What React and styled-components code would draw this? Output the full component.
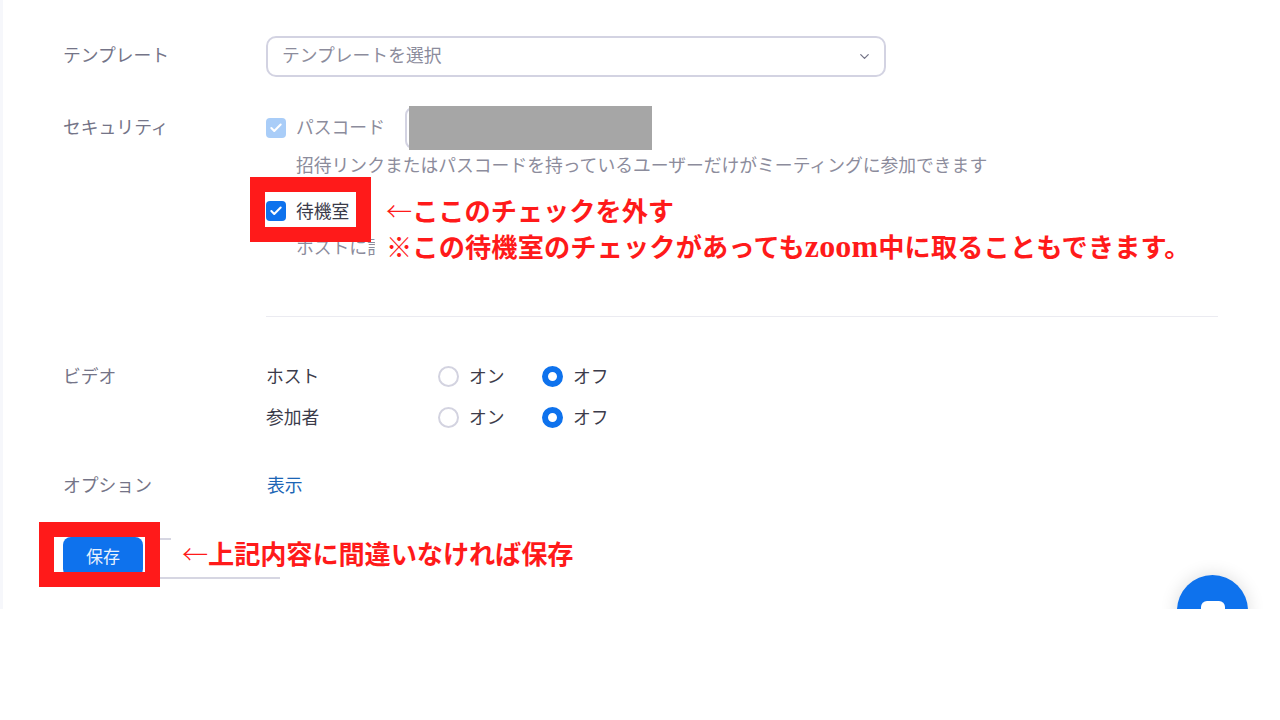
import React from 'react'
import styled, { createGlobalStyle } from 'styled-components'
import { Check, ChevronDown } from 'lucide-react'

const GlobalStyle = createGlobalStyle`
  html, body { margin: 0; padding: 0; background: #fff; }
  body { font-family: "Noto Sans CJK JP", "Noto Sans", sans-serif; }
`
const Page = styled.div`
  position: relative;
  box-sizing: border-box;
  width: 1263px;
  height: 609px;
  overflow: hidden;
  padding: 36px 45px 0 61px;
  background: #fff;
  border-left: 3px solid #f6f7fb;
  font-size: 17.8px;
  color: #747487;
`
const FormRow = styled.div`
  display: grid;
  grid-template-columns: 202px 1fr;
  margin-top: ${props => props.$gap || 0}px;
`
const Label = styled.div`
  margin-left: -1px;
  line-height: ${props => props.$lh}px;
  color: #747487;
`
const Select = styled.div`
  box-sizing: border-box;
  display: flex;
  align-items: center;
  justify-content: space-between;
  width: 620px;
  height: 41px;
  padding: 0 12px 0 14px;
  border: 2px solid #d3d3e2;
  border-radius: 10px;
  color: #8c8c9c;
`
const SelectText = styled.span`
  padding-bottom: 5px;
`
const CheckRow = styled.div`
  position: relative;
  display: flex;
  align-items: center;
  gap: 10px;
  height: ${props => props.$height}px;
  margin-top: ${props => props.$gap || 0}px;
  color: ${props => props.$muted ? '#8c8c9c' : '#3b3b4a'};
`
const CheckText = styled.span`
  padding-bottom: 3px;
`
const CheckBox = styled.span`
  display: flex;
  align-items: center;
  justify-content: center;
  width: 20px;
  height: 20px;
  border-radius: 4px;
  background: ${props => props.$muted ? '#a9cdf8' : '#0e72ed'};
  color: #fff;
`
const PassInput = styled.div`
  box-sizing: border-box;
  width: 60px;
  height: 42px;
  margin-left: 10px;
  border: 2px solid #d3d3e2;
  border-radius: 8px;
`
const Mask = styled.div`
  position: absolute;
  left: 143px;
  top: 0;
  width: 243px;
  height: 44px;
  background: #a6a6a6;
`
const Hint = styled.div`
  margin-left: 30px;
  line-height: 30px;
  color: #8c8c9c;
  white-space: nowrap;
  margin-top: ${props => props.$gap || 0}px;
  width: ${props => props.$width || 'auto'};
  overflow: hidden;
`
const Divider = styled.hr`
  height: 1px;
  margin: 55px 0 44px;
  border: 0;
  background: #ebebf1;
`
const MediaRow = styled.div`
  display: grid;
  grid-template-columns: 172px 104px 104px;
  align-items: center;
  height: 30px;
  margin-top: ${props => props.$gap || 0}px;
  color: #3b3b4a;
`
const MediaText = styled.span`
  padding-bottom: 2px;
`
const RadioLabel = styled.span`
  display: flex;
  align-items: center;
  gap: 10px;
`
const Radio = styled.span`
  box-sizing: border-box;
  width: 21px;
  height: 21px;
  border-radius: 50%;
  background: #fff;
  border: ${props => props.$on ? '6.5px solid #0e72ed' : '2px solid #d3d3e0'};
`
const LinkText = styled.span`
  margin-left: 1px;
  line-height: 36px;
  color: #1b65b5;
`
const SaveRow = styled.div`
  display: flex;
  margin-top: 35px;
  margin-left: -1px;
`
const SaveButton = styled.div`
  box-sizing: border-box;
  width: 80px;
  height: 40px;
  padding-top: 6px;
  text-align: center;
  border-radius: 8px;
  background: #0e72ed;
  color: #e8f1fd;
  font-size: 17px;
`
const GhostButton = styled.div`
  position: relative;
  box-sizing: border-box;
  width: 127px;
  height: 41px;
  margin: 1px 0 0 10px;
  border-bottom: 2px solid #d6d6e2;
  &::before {
    content: '';
    position: absolute;
    top: 0;
    left: 0;
    width: 18px;
    height: 2px;
    background: #d6d6e2;
  }
`
const RedFrame = styled.div`
  position: absolute;
  box-sizing: border-box;
  left: ${props => props.$left}px;
  top: ${props => props.$top}px;
  width: 121px;
  height: 65px;
  border: 15px solid #ff1a1a;
`
const Note = styled.div`
  position: absolute;
  left: ${props => props.$left}px;
  top: ${props => props.$top}px;
  line-height: 36px;
  font-size: 26.2px;
  font-weight: 700;
  letter-spacing: ${props => props.$spacing || 0}px;
  color: #ff1a1a;
  white-space: nowrap;
`
const Arrow = styled.span`
  font-weight: 300;
`
const Latin = styled.span`
  font-family: "Liberation Serif", serif;
  font-size: 32px;
`
const ChatButton = styled.div`
  position: absolute;
  left: 1174px;
  top: 575px;
  display: flex;
  justify-content: center;
  width: 71px;
  height: 71px;
  border-radius: 50%;
  background: #0e72ed;
  box-shadow: 0 0 18px rgba(0, 0, 0, 0.14);
`
const ChatIcon = styled.span`
  width: 24px;
  height: 24px;
  margin-top: 26px;
  border-radius: 6px;
  background: #fff;
`

const MediaLine = ({ label, gap }) => (
  <MediaRow $gap={gap}>
    <MediaText>{label}</MediaText>
    <RadioLabel><Radio /><MediaText>オン</MediaText></RadioLabel>
    <RadioLabel><Radio $on /><MediaText>オフ</MediaText></RadioLabel>
  </MediaRow>
)

const App = () => {
  return <>
    <GlobalStyle />
    <Page>
      <FormRow>
        <Label $lh={36}>テンプレート</Label>
        <Select>
          <SelectText>テンプレートを選択</SelectText>
          <ChevronDown size={15} color="#747487" strokeWidth={2} />
        </Select>
      </FormRow>

      <FormRow $gap={29}>
        <Label $lh={40}>セキュリティ</Label>
        <div>
          <CheckRow $height={43} $muted>
            <CheckBox $muted><Check size={14} strokeWidth={3.5} /></CheckBox>
            <CheckText>パスコード</CheckText>
            <PassInput />
            <Mask />
          </CheckRow>
          <Hint>招待リンクまたはパスコードを持っているユーザーだけがミーティングに参加できます</Hint>
          <CheckRow $height={30} $gap={17}>
            <CheckBox><Check size={14} strokeWidth={3.5} /></CheckBox>
            <CheckText>待機室</CheckText>
          </CheckRow>
          <Hint $gap={5} $width="79px">ホストに許可</Hint>
          <Divider />
        </div>
      </FormRow>

      <FormRow>
        <Label $lh={28}>ビデオ</Label>
        <div>
          <MediaLine label="ホスト" />
          <MediaLine label="参加者" gap={11} />
        </div>
      </FormRow>

      <FormRow $gap={34}>
        <Label $lh={36}>オプション</Label>
        <LinkText>表示</LinkText>
      </FormRow>

      <SaveRow>
        <SaveButton>保存</SaveButton>
        <GhostButton />
      </SaveRow>

      <RedFrame $left={247} $top={177} />
      <RedFrame $left={36} $top={522} />
      <Note $left={383} $top={192}><Arrow>←</Arrow>ここのチェックを外す</Note>
      <Note $left={383} $top={228} $spacing={0.15}>※この待機室のチェックがあっても<Latin>zoom</Latin>中に取ることもできます。</Note>
      <Note $left={179} $top={535} $spacing={-0.1}><Arrow>←</Arrow>上記内容に間違いなければ保存</Note>
      <ChatButton><ChatIcon /></ChatButton>
    </Page>
  </>
}

export default App
